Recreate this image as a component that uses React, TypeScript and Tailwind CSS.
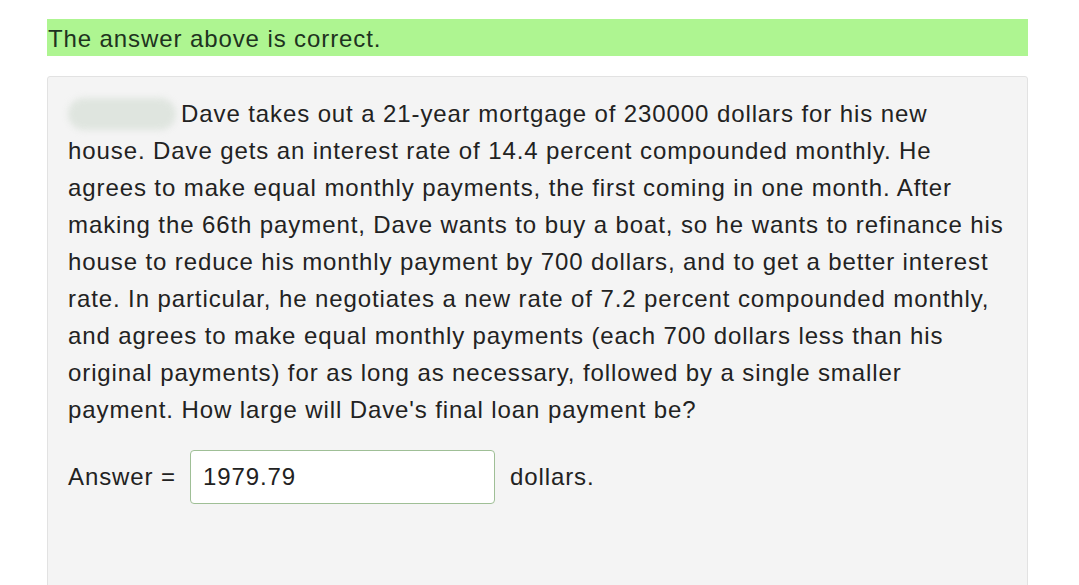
const lines = [
  "house. Dave gets an interest rate of 14.4 percent compounded monthly. He",
  "agrees to make equal monthly payments, the first coming in one month. After",
  "making the 66th payment, Dave wants to buy a boat, so he wants to refinance his",
  "house to reduce his monthly payment by 700 dollars, and to get a better interest",
  "rate. In particular, he negotiates a new rate of 7.2 percent compounded monthly,",
  "and agrees to make equal monthly payments (each 700 dollars less than his",
  "original payments) for as long as necessary, followed by a single smaller",
  "payment. How large will Dave's final loan payment be?",
];

export default function App() {
  return (
    <div
      className="w-[1079px] h-[585px] overflow-hidden bg-white text-[#222] tracking-[0.9px]"
      style={{ fontFamily: '"Liberation Sans", Arial, sans-serif' }}
    >
      <div className="pt-[19px] pl-[47px] pr-[51px]">
        <div className="h-[37px] bg-[#aef591] text-[24px] leading-[39px] text-[#1e3320] pl-[1px]">
          The answer above is correct.
        </div>
        <div className="mt-[20px] h-[560px] bg-[#f4f4f4] border border-[#e2e2e2] rounded-[3px] pl-[20px] pt-[18px]">
          <div className="text-[24px] leading-[37px]">
            <div className="flex items-center whitespace-nowrap">
              <div className="w-[108px] h-[32px] mr-[5px] rounded-full bg-[#dfe5df] blur-[3px]" />
              <span>Dave takes out a 21-year mortgage of 230000 dollars for his new</span>
            </div>
            {lines.map((l) => (
              <div key={l} className="whitespace-nowrap">{l}</div>
            ))}
          </div>
          <div className="mt-[22px] flex items-center text-[24px]">
            <span>Answer =</span>
            <div className="ml-[14px] w-[305px] h-[54px] bg-white border border-[#9fbf96] rounded-[4px] flex items-center pl-[12px]">
              1979.79
            </div>
            <span className="ml-[15px]">dollars.</span>
          </div>
        </div>
      </div>
    </div>
  );
}
